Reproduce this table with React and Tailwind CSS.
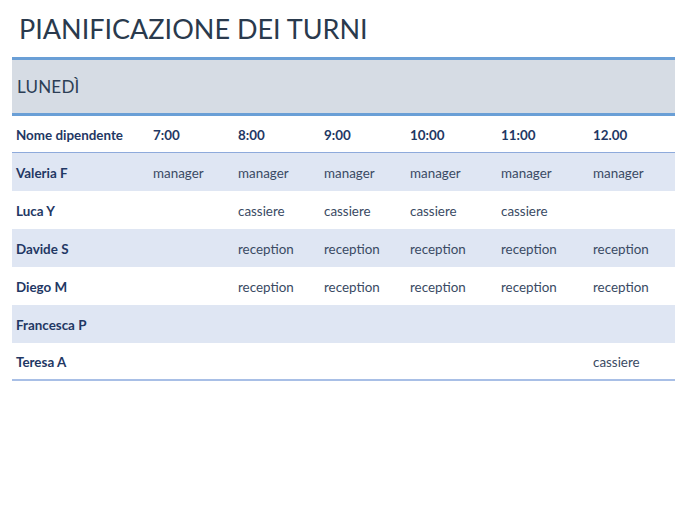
export default function App() {
  const cols = ["7:00", "8:00", "9:00", "10:00", "11:00", "12.00"];
  const rows = [
    ["Valeria F", ["manager", "manager", "manager", "manager", "manager", "manager"]],
    ["Luca Y", ["", "cassiere", "cassiere", "cassiere", "cassiere", ""]],
    ["Davide S", ["", "reception", "reception", "reception", "reception", "reception"]],
    ["Diego M", ["", "reception", "reception", "reception", "reception", "reception"]],
    ["Francesca P", ["", "", "", "", "", ""]],
    ["Teresa A", ["", "", "", "", "", "cassiere"]],
  ];
  const grid = "grid grid-cols-[137px_85px_86px_86px_91px_92px_86px]";
  return (
    <div className="w-[675px] h-[520px] bg-white font-['Lato',sans-serif] overflow-hidden">
      <h1 className="pl-[19px] pt-[12px] h-[57px] text-[27px] leading-[34px] text-[#2a3a4d]">
        PIANIFICAZIONE DEI TURNI
      </h1>
      <div className="ml-[12px]">
        <div className="border-t-[3px] border-b-[3px] border-[#6a9fd6] bg-[#d6dce4] h-[59px] flex items-center pl-[5px] text-[17px] text-[#2c3e55] tracking-[0.2px]">
          LUNEDÌ
        </div>
        <div className={`${grid} h-[37px] items-center pt-[3px] border-b border-[#8eaadb] text-[13.4px] font-bold text-[#1f3864]`}>
          <div className="pl-[4px]">Nome dipendente</div>
          {cols.map((c) => (
            <div key={c} className="pl-[4px]">{c}</div>
          ))}
        </div>
        {rows.map(([name, cells], i) => (
          <div
            key={name}
            className={`${grid} h-[38px] items-center pt-[3px] text-[13.4px] ${i % 2 === 0 ? "bg-[#dfe6f3]" : "bg-white"} ${i === rows.length - 1 ? "border-b-2 border-[#a8bfe6]" : ""}`}
          >
            <div className="pl-[4px] font-bold text-[#1f3864]">{name}</div>
            {cells.map((c, j) => (
              <div key={j} className="pl-[4px] text-[#3a4a63]">{c}</div>
            ))}
          </div>
        ))}
      </div>
    </div>
  );
}
